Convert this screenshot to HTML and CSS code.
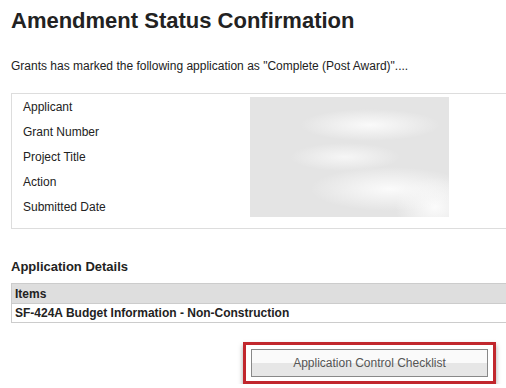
FILE: index.html
```html
<!DOCTYPE html>
<html lang="en">
<head>
    <meta charset="UTF-8">
    <title>Amendment Status Confirmation</title>
    <link rel="stylesheet" href="styles.css">
</head>
<body>
    <div class="page">
        <h1>Amendment Status Confirmation</h1>
        <p class="intro">Grants has marked the following application as "Complete (Post Award)"....</p>

        <div class="info-box">
            <div class="labels">
                <div class="label">Applicant</div>
                <div class="label">Grant Number</div>
                <div class="label">Project Title</div>
                <div class="label">Action</div>
                <div class="label">Submitted Date</div>
            </div>
            <div class="values"></div>
        </div>

        <h2>Application Details</h2>
        <table class="items-table">
            <thead>
                <tr><th>Items</th></tr>
            </thead>
            <tbody>
                <tr><td>SF-424A Budget Information - Non-Construction</td></tr>
            </tbody>
        </table>

        <div class="actions">
            <div class="highlight">
                <button class="btn">Application Control Checklist</button>
            </div>
        </div>
    </div>
</body>
</html>
```

FILE: styles.css
```css
* {
    margin: 0;
    padding: 0;
    box-sizing: border-box;
}

html, body {
    overflow: hidden;
}

body {
    font-family: "Liberation Sans", Arial, sans-serif;
    background: white;
    color: #222;
}

.page {
    width: 530px;
    padding: 8px 0 0 11px;
}

h1 {
    font-size: 22px;
    line-height: 25px;
    font-weight: bold;
    color: #222;
}

.intro {
    font-size: 12px;
    line-height: 14px;
    margin-top: 26px;
}

.info-box {
    margin-top: 20px;
    border: 1px solid #ddd;
    padding: 1px 0 7px 11px;
    display: flex;
    height: 136px;
}

.labels {
    width: 227px;
}

.label {
    font-size: 12px;
    height: 25px;
    line-height: 25px;
}

.values {
    width: 199px;
    height: 120px;
    margin-top: 2px;
    background:
        radial-gradient(ellipse 70px 16px at 120px 28px, #fafafa, transparent),
        radial-gradient(ellipse 55px 14px at 95px 60px, #f6f6f6, transparent),
        radial-gradient(ellipse 80px 22px at 140px 92px, #fbfbfb, transparent),
        radial-gradient(ellipse 40px 30px at 185px 110px, #fbfbfb, transparent),
        #e4e4e4;
}

h2 {
    font-size: 13px;
    line-height: 16px;
    font-weight: bold;
    margin-top: 30px;
}

.items-table {
    margin-top: 8px;
    width: 520px;
    border-collapse: collapse;
    font-size: 12px;
    font-weight: bold;
}

.items-table th,
.items-table td {
    text-align: left;
    padding: 0 3px;
    border: 1px solid #ccc;
    height: 19px;
}

.items-table th {
    background: #dedede;
    height: 20px;
}

.actions {
    display: flex;
    justify-content: flex-end;
    width: 485px;
    margin-top: 19px;
}

.highlight {
    border: 3px solid #c1272d;
    padding: 4px 5px;
    box-shadow: 0 3px 5px rgba(0,0,0,0.35);
}

.btn {
    display: block;
    width: 237px;
    height: 28px;
    border: 1px solid #888;
    outline: 1px solid white;
    background: linear-gradient(#fafafa 0, #fafafa 50%, #e6e6e6 50%, #e6e6e6 100%);
    font-family: "Liberation Sans", Arial, sans-serif;
    font-size: 12px;
    color: #555;
}
```
